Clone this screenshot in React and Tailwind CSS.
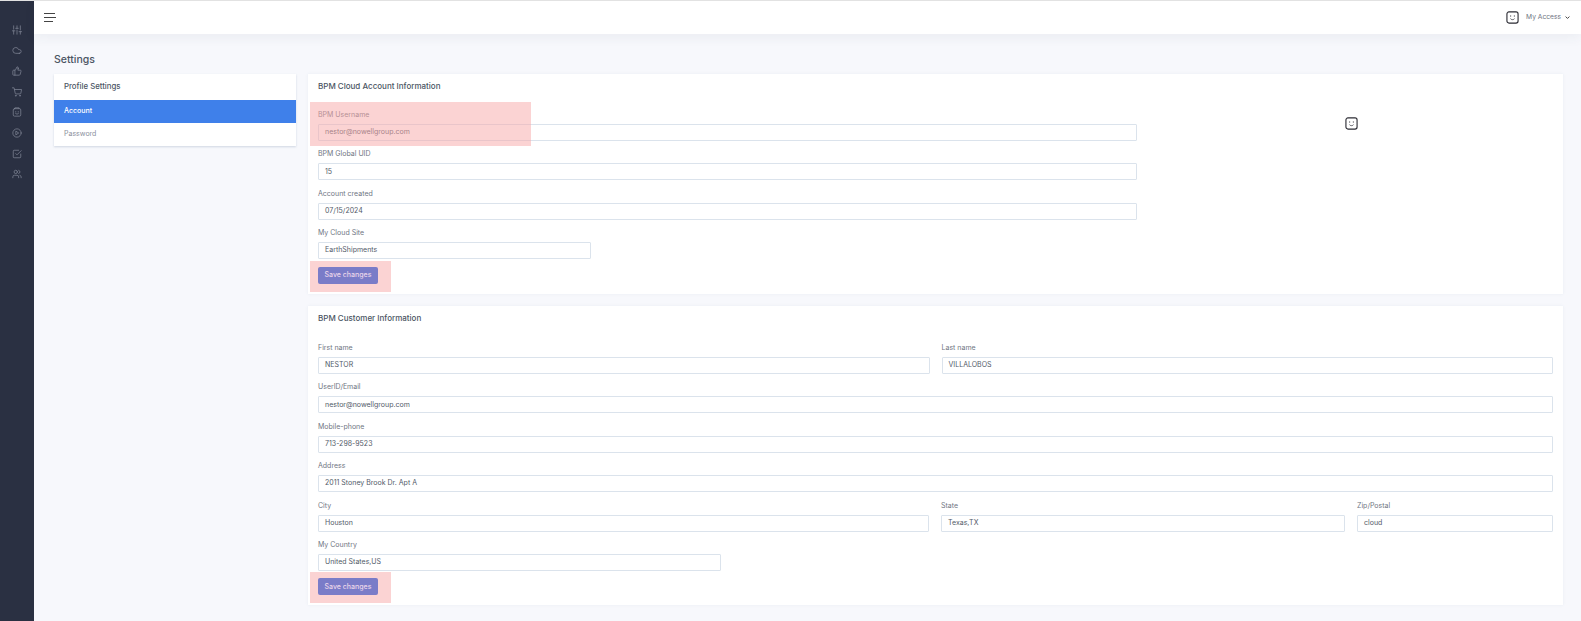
const font = "font-['Inter','Open_Sans',sans-serif]";

function Smile({ cls = "" }) {
  return (
    <svg viewBox="0 0 14 14" className={cls} fill="none" stroke="#2b2b33">
      <rect x="1" y="1" width="12" height="12" rx="2.2" strokeWidth="1.2" />
      <path d="M5 4.800v1.200M9 4.800v1.200" strokeWidth="1" />
      <path d="M4.800 8.200c1 1.500 3.400 1.500 4.400 0" strokeWidth="0.8" />
    </svg>
  );
}

function SideIcon({ children }) {
  return (
    <svg viewBox="0 0 24 24" className="w-[10px] h-[10px]" fill="none" stroke="#7f8595" strokeWidth="1.8" strokeLinecap="round" strokeLinejoin="round">
      {children}
    </svg>
  );
}

const icons = [
  <path d="M4 22v-8M4 10V2M12 22v-10M12 8V2M20 22v-6M20 12V2M1 14h6M9 8h6M17 16h6" />,
  <path d="M17.500 20H9a7 7 0 1 1 6.700-9h1.800a4.500 4.500 0 1 1 0 9z" />,
  <path d="M7 10v12M15 5.900 14 10h5.800a2 2 0 0 1 1.900 2.600l-2.300 8a2 2 0 0 1-1.900 1.400H4a2 2 0 0 1-2-2v-8a2 2 0 0 1 2-2h2.800a2 2 0 0 0 1.800-1.100L12 2a3 3 0 0 1 3 3.900z" />,
  <g><circle cx="9" cy="21" r="1" /><circle cx="19" cy="21" r="1" /><path d="M1 2h4l2.700 13a2 2 0 0 0 2 1.600h9.500a2 2 0 0 0 2-1.600L23 6H6" /></g>,
  <g><rect x="3" y="4" width="18" height="18" rx="3" /><path d="M7 4V2h10v2M9 11v1M15 11v1M8.500 15.500c2 2 5 2 7 0" /></g>,
  <g><circle cx="12" cy="12" r="10" /><path d="m10 8 6 4-6 4z" /></g>,
  <g><path d="m9 11 3 3L22 4" /><path d="M21 12v7a2 2 0 0 1-2 2H5a2 2 0 0 1-2-2V5a2 2 0 0 1 2-2h11" /></g>,
  <g><path d="M16 21v-2a4 4 0 0 0-4-4H6a4 4 0 0 0-4 4v2" /><circle cx="9" cy="7" r="4" /><path d="M22 21v-2a4 4 0 0 0-3-3.900M16 3.100a4 4 0 0 1 0 7.800" /></g>,
];

function Field({ label, value, cls = "" }) {
  return (
    <div className={cls}>
      <label className="block h-[12px] leading-[12px] text-[7px] text-[#6f7683] mb-[3px]">{label}</label>
      <div className="h-[17px] border border-[#dbe3ec] rounded-[1px] bg-white px-[6px] flex items-center text-[7px] text-[#525a68]">{value}</div>
    </div>
  );
}

function SaveBtn() {
  return (
    <div className="relative flex h-[17px] mt-[7.5px]">
      <div className="absolute left-[-8px] top-[-6px] w-[81px] h-[31px] bg-[#f8a8a8]/50 pointer-events-none" />
      <button className="relative w-[60px] h-[17px] rounded-[2px] bg-[#7a7cc8] text-[#ead6ea] text-[7px] font-medium">Save changes</button>
    </div>
  );
}

export default function App() {
  return (
    <div className={`${font} w-[1581px] h-[621px] overflow-hidden bg-[#f7f8fc] flex flex-col border-t border-[#e2e2e2]`}>
      <div className="flex flex-1 min-h-0">
        <aside className="w-[34px] shrink-0 bg-[#2a3042] flex flex-col items-center pt-[23.5px] gap-[10.700px]">
          {icons.map((p, i) => <SideIcon key={i}>{p}</SideIcon>)}
        </aside>
        <div className="flex-1 min-w-0 flex flex-col">
          <header className="h-[33px] bg-white shadow-[0_4px_12px_rgba(50,60,90,0.06)] flex items-center pl-[10px] pr-[11px]">
            <div className="flex flex-col gap-[3.300px] items-start">
              <span className="block w-[11px] h-px bg-[#444]" />
              <span className="block w-[12px] h-px bg-[#444]" />
              <span className="block w-[9px] h-px bg-[#444]" />
            </div>
            <div className="ml-auto flex items-center">
              <Smile cls="w-[13px] h-[13px]" />
              <span className="ml-[7px] text-[6.7px] text-[#6f7683]">My Access</span>
              <svg viewBox="0 0 8 8" className="w-[5px] h-[5px] ml-[4px]" fill="none" stroke="#444" strokeWidth="1.600"><path d="m1 2.500 3 3 3-3" /></svg>
            </div>
          </header>
          <main className="flex-1 pl-[20px] pr-[18px]">
            <h1 className="text-[10.5px] text-[#4b5563] h-[40px] leading-[14px] pt-[19px] font-medium">Settings</h1>
            <div className="flex items-start gap-[12px]">
              <section className="w-[242px] shrink-0 bg-white shadow-[0_1px_2px_rgba(120,135,170,0.3)]">
                <div className="h-[26px] flex items-center px-[10px] text-[7.8px] font-medium text-[#4b5563]">Profile Settings</div>
                <div className="h-[23px] flex items-center px-[10px] text-[7px] font-medium text-white bg-[#3f80ea]">Account</div>
                <div className="h-[23px] flex items-center px-[10px] text-[7px] text-[#8a8f9c]">Password</div>
              </section>
              <div className="flex-1 min-w-0 flex flex-col gap-[12px]">
                <section className="relative bg-white h-[220px] px-[10px] shadow-[0_0_3px_rgba(120,135,170,0.1)]">
                  <h2 className="h-[28px] pt-[6px] leading-[12px] text-[8px] font-medium text-[#4b5563]">BPM Cloud Account Information</h2>
                  <div className="w-[819px] pt-[7px] flex flex-col gap-[7.400px]">
                    <Field label="BPM Username" value="nestor@nowellgroup.com" />
                    <Field label="BPM Global UID" value="15" />
                    <Field label="Account created" value="07/15/2024" />
                    <Field label="My Cloud Site" value="EarthShipments" cls="w-[273px]" />
                  </div>
                  <SaveBtn />
                  <div className="absolute left-[2px] top-[28px] w-[221px] h-[44px] bg-[#f8a8a8]/50 pointer-events-none" />
                  <Smile cls="absolute left-[1037px] top-[43px] w-[13px] h-[13px]" />
                </section>
                <section className="bg-white h-[299px] px-[10px] shadow-[0_0_3px_rgba(120,135,170,0.1)]">
                  <h2 className="h-[36px] pt-[6px] leading-[12px] text-[8px] font-medium text-[#4b5563]">BPM Customer Information</h2>
                  <div className="flex flex-col gap-[7.400px]">
                    <div className="flex gap-[12px]">
                      <Field label="First name" value="NESTOR" cls="flex-1" />
                      <Field label="Last name" value="VILLALOBOS" cls="flex-1" />
                    </div>
                    <Field label="UserID/Email" value="nestor@nowellgroup.com" />
                    <Field label="Mobile-phone" value="713-298-9523" />
                    <Field label="Address" value="2011 Stoney Brook Dr. Apt A" />
                    <div className="flex gap-[12px]">
                      <Field label="City" value="Houston" cls="w-[611px]" />
                      <Field label="State" value="Texas,TX" cls="w-[404px]" />
                      <Field label="Zip/Postal" value="cloud" cls="flex-1" />
                    </div>
                    <Field label="My Country" value="United States,US" cls="w-[403px]" />
                  </div>
                  <SaveBtn />
                </section>
              </div>
            </div>
          </main>
        </div>
      </div>
    </div>
  );
}
